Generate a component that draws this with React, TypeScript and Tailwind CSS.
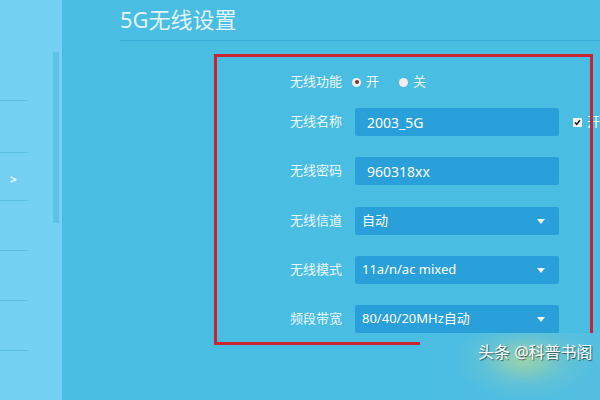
import React from 'react';

const font = { fontFamily: '"Noto Sans", "Noto Sans CJK SC", sans-serif' };

const Label = ({ children }: { children: React.ReactNode }) => (
  <div className="w-[80px] shrink-0 text-right text-[13px] text-[#eaf7fd]">{children}</div>
);

const Radio = ({ checked, text }: { checked?: boolean; text: string }) => (
  <label className="flex items-center gap-[5px] text-[13px] text-[#f2fafd]">
    <span className="w-[9px] h-[9px] rounded-full bg-[#f6ecec] flex items-center justify-center">
      {checked && <span className="w-[4px] h-[4px] rounded-full bg-[#6b3a2e]" />}
    </span>
    {text}
  </label>
);

const Field = ({ value, select }: { value: string; select?: boolean }) => (
  <div
    className={`w-[204px] h-[28px] shrink-0 rounded-[2px] bg-[#29a0d9] flex items-center text-white ${
      select ? 'pl-[7px] pr-[14px] text-[13px]' : 'pl-[12px] text-[14px]'
    }`}
  >
    <span className="flex-1 truncate">{value}</span>
    {select && (
      <svg width="8" height="5" viewBox="0 0 8 5">
        <path d="M0 0h8L4 5z" fill="#f4fbff" />
      </svg>
    )}
  </div>
);

const Row = ({ label, children, className = '' }: { label: string; children: React.ReactNode; className?: string }) => (
  <div className={`flex items-center gap-[13px] h-[28px] ${className}`}>
    <Label>{label}</Label>
    {children}
  </div>
);

export default function App() {
  return (
    <div className="relative w-[600px] h-[400px] overflow-hidden flex bg-[#4abde3]" style={font}>
      {/* left menu */}
      <aside className="relative w-[62px] shrink-0 bg-[#74d1f3] pt-[50px]">
        {[0, 1, 2, 3, 4, 5].map((i) => (
          <div key={i} className="h-[50px] flex items-center pl-[10px]">
            <div className="w-[28px] h-px bg-[#5bbfe4] absolute left-0" style={{ top: 100 + i * 50 + (i === 1 ? 2 : 0) }} />
            {i === 2 && <span className="text-white text-[12px] font-bold mt-[10px]">&gt;</span>}
          </div>
        ))}
        <div className="absolute left-[53px] top-[52px] w-[6px] h-[171px] bg-[#5cc2e6]" />
      </aside>

      <main className="flex-1">
        <div className="ml-[58px] pt-[4px] h-[41px] border-b border-[#3aa8d4]">
          <h1 className="text-[22px] leading-[30px] text-[#e3f5fc]">5G无线设置</h1>
        </div>

        <div className="ml-[200px] mt-[27px] flex flex-col">
          <Row label="无线功能">
            <div className="flex items-center gap-[20px] ml-[-3px]">
              <Radio checked text="开" />
              <Radio text="关" />
            </div>
          </Row>
          <Row label="无线名称" className="mt-[12px]">
            <Field value="2003_5G" />
            <label className="flex items-center gap-[5px] ml-[1px] text-[13px] text-white whitespace-nowrap">
              <span className="w-[9px] h-[9px] bg-[#f4f4f4] rounded-[1px] flex items-center justify-center">
                <svg width="7" height="7" viewBox="0 0 7 7">
                  <path d="M1 3.5l1.7 1.8L6 1.2" stroke="#222" strokeWidth="1.6" fill="none" />
                </svg>
              </span>
              开启无线广播
            </label>
          </Row>
          <Row label="无线密码" className="mt-[21px]">
            <Field value="960318xx" />
          </Row>
          <Row label="无线信道" className="mt-[22px]">
            <Field value="自动" select />
          </Row>
          <Row label="无线模式" className="mt-[21px]">
            <Field value="11a/n/ac mixed" select />
          </Row>
          <Row label="频段带宽" className="mt-[21px]">
            <Field value="80/40/20MHz自动" select />
          </Row>
        </div>
      </main>

      {/* red highlight box */}
      <div className="absolute left-[214px] top-[54px] w-[379px] h-[291px] border-[3px] border-[#cc2330] pointer-events-none" />

      {/* watermark */}
      <div
        className="absolute left-[420px] top-[333px] w-[180px] h-[67px]"
        style={{
          background:
            'radial-gradient(ellipse 70px 40px at 58% 40%, rgba(170,214,160,0.85), rgba(120,200,200,0.4) 60%, rgba(74,189,227,0) 100%), linear-gradient(90deg, #4abde3, #55bfe0)',
        }}
      />
      <div
        className="absolute left-[478px] top-[340px] whitespace-nowrap text-[16px] text-white"
        style={{ textShadow: '1px 1px 1px rgba(0,0,0,0.55)' }}
      >
        头条 @科普书阁
      </div>
    </div>
  );
}
